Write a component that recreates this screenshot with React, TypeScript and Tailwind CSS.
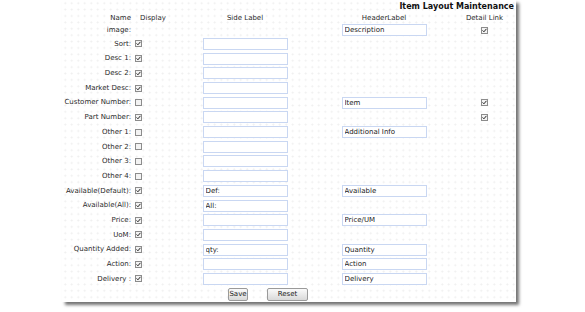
import React from "react";

interface FieldRow {
  name: string;
  display?: boolean;
  side?: string | null;
  header?: string | null;
  detail?: boolean;
}

const rows: FieldRow[] = [
  { name: "Sort:", display: true, side: "" },
  { name: "Desc 1:", display: true, side: "" },
  { name: "Desc 2:", display: true, side: "" },
  { name: "Market Desc:", display: true, side: "" },
  { name: "Customer Number:", display: false, side: "", header: "Item", detail: true },
  { name: "Part Number:", display: true, side: "", detail: true },
  { name: "Other 1:", display: false, side: "", header: "Additional Info" },
  { name: "Other 2:", display: false, side: "" },
  { name: "Other 3:", display: false, side: "" },
  { name: "Other 4:", display: false, side: "" },
  { name: "Available(Default):", display: true, side: "Def:", header: "Available" },
  { name: "Available(All):", display: true, side: "All:" },
  { name: "Price:", display: true, side: "", header: "Price/UM" },
  { name: "UoM:", display: true, side: "" },
  { name: "Quantity Added:", display: true, side: "qty:", header: "Quantity" },
  { name: "Action:", display: true, side: "", header: "Action" },
  { name: "Delivery :", display: true, side: "", header: "Delivery" },
];

const Check = ({ on }: { on: boolean }) => (
  <span className="inline-flex w-[7px] h-[7px] items-center justify-center border border-[#8c8c8c] bg-[#f3f3f3]">
    {on && (
      <svg viewBox="0 0 7 7" className="w-[5px] h-[5px]">
        <path d="M0.8 3.4 L2.7 5.3 L6.2 1.2" stroke="#222" strokeWidth="1.4" fill="none" />
      </svg>
    )}
  </span>
);

const Field = ({ value }: { value: string }) => (
  <input
    readOnly
    value={value}
    className="w-[85px] h-[12px] border border-[#c9d7f2] bg-white px-[2px] text-[7px] leading-none text-[#222] outline-none"
  />
);

const Row = ({ row, className }: { row: FieldRow; className: string }) => (
  <div className={`grid grid-cols-[69px_44px_140px_138px_1fr] items-center ${className}`}>
    <div className="text-right">{row.name}</div>
    <div className="pl-[4px] flex items-center">
      {row.display !== undefined && <Check on={row.display} />}
    </div>
    <div className="flex justify-center">{row.side !== undefined && row.side !== null && <Field value={row.side} />}</div>
    <div className="flex justify-center">{row.header && <Field value={row.header} />}</div>
    <div className="flex justify-center">{row.detail && <Check on />}</div>
  </div>
);

export default function App() {
  return (
    <div className="w-[585px] h-[312px] bg-white overflow-hidden font-['DejaVu_Sans',Verdana,sans-serif] text-[7px] text-[#2a2a2a]">
      <div className="ml-[62px] w-[454px] h-[302px] bg-white shadow-[3px_3px_3px_rgba(0,0,0,0.55)] [background-image:radial-gradient(circle,#eeeeee_0.8px,transparent_1.1px)] [background-size:6.5px_6.4px]">
        {/* TITLE */}
        <div className="h-[13px] pr-[2px] text-right text-[8px] font-bold leading-[14px] text-[#111]">
          Item Layout Maintenance
        </div>

        {/* HEADINGS */}
        <div className="grid grid-cols-[69px_44px_140px_138px_1fr] items-center h-[11px]">
          <div className="text-right">Name</div>
          <div className="text-center">Display</div>
          <div className="text-center">Side Label</div>
          <div className="text-center">HeaderLabel</div>
          <div className="text-center">Detail Link</div>
        </div>

        <Row row={{ name: "image:", header: "Description", detail: true }} className="h-[12.6px]" />

        {rows.map((r) => (
          <Row key={r.name} row={r} className="h-[14.7px]" />
        ))}

        {/* BUTTONS */}
        <div className="flex items-center gap-[19px] pl-[166px] pt-[2px]">
          <button className="h-[13px] w-[20px] rounded-[2px] border border-[#9a9a9a] bg-gradient-to-b from-[#fafafa] to-[#d9d9d9] text-[7px] leading-none text-[#222]">
            Save
          </button>
          <button className="h-[13px] w-[41px] rounded-[2px] border border-[#9a9a9a] bg-gradient-to-b from-[#fafafa] to-[#d9d9d9] text-[7px] leading-none text-[#222]">
            Reset
          </button>
        </div>
      </div>
    </div>
  );
}
